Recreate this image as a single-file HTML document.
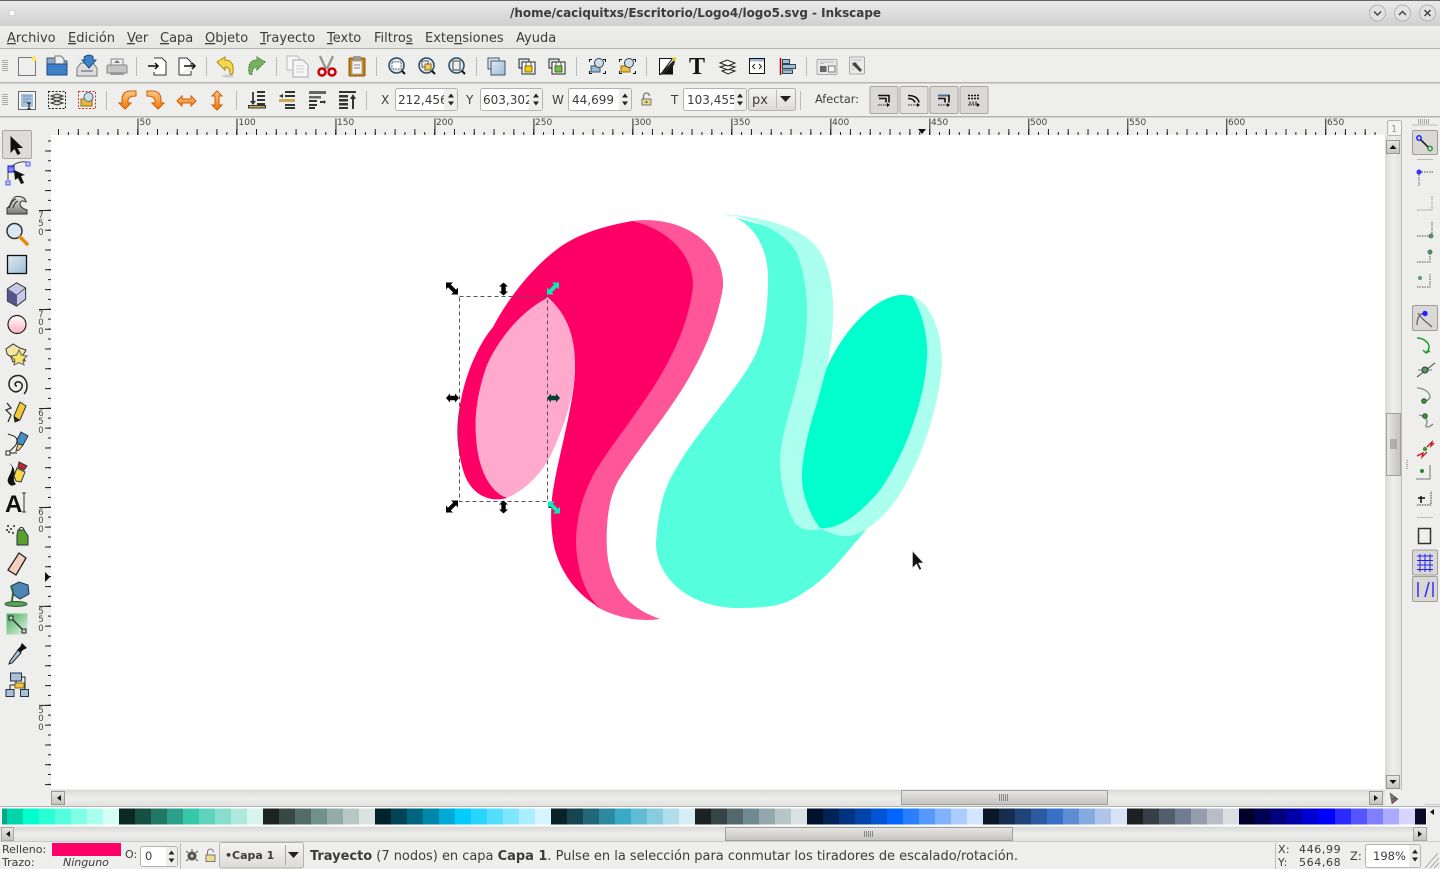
<!DOCTYPE html>
<html lang="es"><head><meta charset="utf-8"><title>logo5.svg - Inkscape</title>
<style>
html,body{margin:0;padding:0;background:#eeeeec;width:1440px;height:869px;overflow:hidden}
svg{display:block}
text{font-family:"DejaVu Sans","Liberation Sans",sans-serif;fill:#3c3c3c}
.m{font-size:13px}
.s{font-size:11.5px}
.r{font-size:9px;fill:#444}
.rv{font-size:8.5px;fill:#444;text-anchor:middle}
</style></head><body>
<svg width="1440" height="869" viewBox="0 0 1440 869" xmlns="http://www.w3.org/2000/svg">
<defs>
<linearGradient id="tb" x1="0" y1="0" x2="0" y2="1"><stop offset="0" stop-color="#ebebeb"/><stop offset="1" stop-color="#cfcfcf"/></linearGradient>
<linearGradient id="mn" x1="0" y1="0" x2="0" y2="1"><stop offset="0" stop-color="#eeefea"/><stop offset="1" stop-color="#e6e6e3"/></linearGradient>
<linearGradient id="sh" x1="0" y1="0" x2="0" y2="1"><stop offset="0" stop-color="#d9d9d6"/><stop offset=".5" stop-color="#eeeeec"/><stop offset="1" stop-color="#e2e2df"/></linearGradient>
<linearGradient id="sv" x1="0" y1="0" x2="1" y2="0"><stop offset="0" stop-color="#d9d9d6"/><stop offset=".5" stop-color="#eeeeec"/><stop offset="1" stop-color="#e2e2df"/></linearGradient>
<linearGradient id="th" x1="0" y1="0" x2="0" y2="1"><stop offset="0" stop-color="#e8e7e5"/><stop offset="1" stop-color="#c4c2be"/></linearGradient>
<linearGradient id="tv" x1="0" y1="0" x2="1" y2="0"><stop offset="0" stop-color="#e8e7e5"/><stop offset="1" stop-color="#c4c2be"/></linearGradient>
<linearGradient id="btn" x1="0" y1="0" x2="0" y2="1"><stop offset="0" stop-color="#f4f4f2"/><stop offset="1" stop-color="#dcdbd8"/></linearGradient>
<linearGradient id="blue" x1="0" y1="0" x2="1" y2="1"><stop offset="0" stop-color="#dfe9f2"/><stop offset="1" stop-color="#9dbcd6"/></linearGradient>
<linearGradient id="org" x1="0" y1="0" x2="0" y2="1"><stop offset="0" stop-color="#fcc98e"/><stop offset="1" stop-color="#f57900"/></linearGradient>
<linearGradient id="grn" x1="0" y1="0" x2="1" y2="1"><stop offset="0" stop-color="#3fae5c"/><stop offset="1" stop-color="#e8f5ea"/></linearGradient>
<linearGradient id="pnk" x1="0" y1="0" x2="0" y2="1"><stop offset="0" stop-color="#fff"/><stop offset="1" stop-color="#ffb0c0"/></linearGradient>
<linearGradient id="wave" x1="0" y1="0" x2="0" y2="1"><stop offset="0" stop-color="#eee"/><stop offset="1" stop-color="#777"/></linearGradient>
<g id="h1"><path d="M-6.500-6.500H.5L-1.700-4.500 3.500.7 5.500-1.500V5.500H-1.500L.7 3.500-4.500-1.700-6.500.5Z"/></g>
<g id="h2"><path d="M5.500-6.500H-1.500L.7-4.500-4.500.7-6.500-1.500V5.500H.5L-1.700 3.500 3.500-1.700 5.500.5Z"/></g>
<g id="hv"><path d="M0-6.500 4.500-2.500H2.200V2.500H4.500L0 6.500-4.500 2.500H-2.200V-2.500H-4.500Z"/></g>
<g id="hh"><path d="M-6.500 0-2.500-4.500V-2.200H2.500V-4.500L6.500 0 2.500 4.500V2.200H-2.500V4.500Z"/></g>
<g id="spn"><path d="M0-6 3-2H-3Z M0 6 3 2H-3Z" fill="#222"/></g>
<g id="up"><path d="M-3.500 2 0-2 3.500 2Z" fill="#111"/></g>
</defs>

<!-- window chrome -->
<rect width="1440" height="869" fill="#eeeeec"/>
<rect width="1440" height="26" fill="url(#tb)"/>
<rect width="1440" height="1" fill="#666"/>
<circle cx="12" cy="13" r="3" fill="#fff" stroke="#ccc"/>
<text x="510" y="17" style="font-size:12px;font-weight:bold" textLength="371" lengthAdjust="spacingAndGlyphs">/home/caciquitxs/Escritorio/Logo4/logo5.svg - Inkscape</text>
<g fill="#e2e2e2" stroke="#b5b5b5"><circle cx="1377.500" cy="13" r="8"/><circle cx="1402.500" cy="13" r="8"/><circle cx="1427.500" cy="13" r="8"/></g>
<g fill="none" stroke="#444" stroke-width="1.500"><path d="M1374 11.500l3.500 3.500 3.500-3.500M1399 15l3.500-3.500 3.500 3.500M1424.500 10l6 6M1430.500 10l-6 6"/></g>

<!-- menu -->
<rect y="26" width="1440" height="22" fill="url(#mn)"/>
<rect y="48" width="1440" height="1" fill="#b5b5b0"/>
<g class="m">
<text class="m" x="7" y="42"><tspan text-decoration="underline">A</tspan>rchivo</text>
<text class="m" x="68" y="42"><tspan text-decoration="underline">E</tspan>dición</text>
<text class="m" x="127" y="42"><tspan text-decoration="underline">V</tspan>er</text>
<text class="m" x="160" y="42"><tspan text-decoration="underline">C</tspan>apa</text>
<text class="m" x="205" y="42"><tspan text-decoration="underline">O</tspan>bjeto</text>
<text class="m" x="260" y="42"><tspan text-decoration="underline">T</tspan>rayecto</text>
<text class="m" x="327" y="42"><tspan text-decoration="underline">T</tspan>exto</text>
<text class="m" x="374" y="42">Filtro<tspan text-decoration="underline">s</tspan></text>
<text class="m" x="425" y="42">Exte<tspan text-decoration="underline">n</tspan>siones</text>
<text class="m" x="516" y="42">Ayuda</text>
</g>

<!-- toolbars background -->
<rect y="82" width="1440" height="1.500" fill="#b5b5b0"/>
<rect y="116" width="1440" height="1.500" fill="#b5b5b0"/>
<g stroke="#aaa"><path d="M2 60.500h6M2 62.500h6M2 64.500h6M2 66.500h6M2 68.500h6M2 70.500h6M2 94.500h6M2 96.500h6M2 98.500h6M2 100.500h6M2 102.500h6M2 104.500h6M12 119v5M14 119v5M16 119v5M18 119v5M20 119v5"/></g>
<g stroke="#bbb"><path d="M136.500 57v19M206.500 57v19M276.500 57v19M376.500 57v19M476.500 57v19M576.500 57v19M646.500 57v19M806.500 57v19M106.500 91v19M236.500 91v19M366.500 91v19M800.500 91v19"/></g>

<!-- toolbar 1 icons -->
<g>
<rect x="18.500" y="57.500" width="17" height="18" fill="#eee" stroke="#777"/><circle cx="34" cy="59" r="2.500" fill="#fce94f"/>
<path d="M47 75V58h8l2 3h10v14Z" fill="#8aa8c8" stroke="#456"/><path d="M55 56h6l3 3v6H55Z" fill="#eee" stroke="#777"/><path d="M47 64H67V75H47Z" fill="#3f7fc7" stroke="#204a87"/>
<path d="M77 68l4-5h12l4 5v8H77Z" fill="#ddd" stroke="#777"/><path d="M84 57c4-3 8-2 9 0v3h3l-7 8-7-8h3Z" fill="#3a85c7" stroke="#204a87"/><path d="M81 71h12" stroke="#999" stroke-width="2"/>
<path d="M111 59h12v7h-12Z" fill="#eee" stroke="#888"/><path d="M108 65h18q1 0 1 2v6h-20v-6q0-2 1-2Z" fill="#c5c5c5" stroke="#888"/><rect x="110" y="72" width="14" height="3" fill="#999"/><path d="M117 60l-3 3h6Z" fill="#777"/>
<path d="M154 58h8l4 4v13h-12v-3" fill="#fff" stroke="#333"/><path d="M148 66h10m-3-3 3 3-3 3" fill="none" stroke="#111" stroke-width="1.500"/>
<path d="M179 75V58h8l4 4v4M191 71v4h-12" fill="#fff" stroke="#333"/><path d="M184 66h11m-3-3 3 3-3 3" fill="none" stroke="#111" stroke-width="1.500"/>
<path d="M217 62l8-5v3c7 0 9 5 8 13-1 2-2 2-3 1 0-5-2-7-5-7v3Z" fill="#f3d84c" stroke="#a58a10"/><ellipse cx="228" cy="76" rx="6" ry="1.500" fill="#ccc"/>
<path d="M265 62l-8-5v3c-7 0-9 5-8 13 1 2 2 2 3 1 0-5 2-7 5-7v3Z" fill="#76b260" stroke="#3b7a28" stroke-dasharray="2 1"/>
<path d="M287 56h10l3 3v11h-13Z" fill="#f6f6f6" stroke="#bbb"/><path d="M293 60h10l5 5v12h-15Z" fill="#f6f6f6" stroke="#aaa"/><path d="M296 66h8M296 69h8M296 72h8" stroke="#ccc"/>
<path d="M320 56l6 13M333 56l-6 13" stroke="#999" stroke-width="2.500"/><circle cx="322" cy="72" r="3.500" fill="none" stroke="#cc0000" stroke-width="2.500"/><circle cx="332" cy="72" r="3.500" fill="none" stroke="#cc0000" stroke-width="2.500"/>
<rect x="349" y="58" width="16" height="18" rx="1" fill="#c17d11" stroke="#8f5902"/><rect x="352" y="61" width="10" height="13" fill="#f4f4f4" stroke="#aaa"/><rect x="353" y="56" width="8" height="4" rx="1" fill="#999"/><path d="M354 65h6M354 68h6" stroke="#888"/>
</g>
<g>
<g fill="#dbe6f0" stroke="#2e4a60" stroke-width="1.500"><circle cx="396.500" cy="65.500" r="7.500"/><circle cx="426.500" cy="65.500" r="7.500"/><circle cx="456.500" cy="65.500" r="7.500"/></g>
<path d="M402 71l3 3M432 71l3 3M462 71l3 3" stroke="#111" stroke-width="2"/>
<rect x="392" y="62" width="9" height="7" fill="#fff" stroke="#555" stroke-dasharray="1.500 1"/><rect x="422" y="61" width="6" height="6" fill="#fff" stroke="#555"/><rect x="425" y="64" width="6" height="6" fill="#f0d060" stroke="#8a6a10"/><rect x="453" y="61" width="7" height="9" fill="#eee" stroke="#444"/>
<rect x="488" y="58" width="11" height="11" fill="#dce7f1" stroke="#456"/><rect x="491" y="61" width="14" height="14" fill="url(#blue)" stroke="#456"/>
<rect x="519" y="59" width="10" height="9" fill="#dce7f1" stroke="#222"/><rect x="522" y="62" width="13" height="12" fill="#fff" stroke="#222"/><rect x="525" y="66" width="7" height="6" fill="#edd400" stroke="#8a6a10"/><path d="M526 66v-2a2 2 0 0 1 5 0v2" fill="none" stroke="#555"/>
<rect x="549" y="59" width="10" height="9" fill="#dce7f1" stroke="#222"/><rect x="552" y="62" width="13" height="12" fill="#fff" stroke="#222"/><rect x="555" y="66" width="7" height="6" fill="#73c04f" stroke="#3a6a10"/><path d="M556 66v-2a2 2 0 0 1 5 0v2" fill="none" stroke="#555"/>
<g fill="#111"><path d="M589 59h3v1h-2v2h-1ZM603 59h3v3h-1v-2h-2ZM589 71h1v2h2v1h-3ZM605 71h1v3h-3v-1h2Z"/><path d="M619 59h3v1h-2v2h-1ZM633 59h3v3h-1v-2h-2ZM619 71h1v2h2v1h-3ZM635 71h1v3h-3v-1h2Z"/></g>
<rect x="591" y="66" width="9" height="6" fill="#9db8d2" stroke="#456"/><circle cx="599" cy="63" r="4.500" fill="#cfdde9" stroke="#345"/>
<rect x="621" y="66" width="9" height="6" fill="#f0c040" stroke="#8a6a10"/><circle cx="629" cy="63" r="4.500" fill="#cfdde9" stroke="#345"/>
<path d="M659.500 58.500h13l-12 16h-1Z" fill="#fff" stroke="#111"/><path d="M660 74.500l13-13v13Z" fill="#111"/><path d="M660 74l16-16-2 7-10 9Z" fill="#222"/><path d="M672 58l4-1-1 5Z" fill="#edd400"/>
<text x="689" y="74" style="font-family:'Liberation Serif',serif;font-weight:bold;font-size:24px;fill:#111">T</text>
<g fill="#f4f4f4" stroke="#222"><path d="M722 71l6-2 7 2-7 3Z"/><path d="M720 67l7-2 8 2-7 3Z"/><path d="M720 63l7-3 8 3-7 3Z"/></g>
<rect x="749.500" y="58.500" width="15" height="15" fill="#fff" stroke="#111"/><rect x="750" y="59" width="14" height="2.500" fill="#9db8d2"/><path d="M755 64l-2.500 2.500 2.500 2.500M759 64l2.500 2.500-2.500 2.500" fill="none" stroke="#222"/>
<path d="M780.500 58v17" stroke="#a40000" stroke-width="1.500"/><g fill="#a3bfd8" stroke="#345"><rect x="782.500" y="59.500" width="7" height="4"/><rect x="782.500" y="64.500" width="13" height="4"/><rect x="782.500" y="70" width="10" height="3.500"/></g>
<rect x="817" y="59.500" width="20" height="15" rx="1" fill="#e8e8e8" stroke="#aaa"/><path d="M820 62h14M820 63.500h4" stroke="#bbb"/><rect x="820" y="66" width="6.500" height="6" fill="#666"/><rect x="828.500" y="66" width="6.500" height="6" fill="#f5f5f5" stroke="#777"/>
<rect x="849.500" y="57" width="15" height="17" rx="1" fill="#ececec" stroke="#aaa"/><path d="M851 60h11M851 63h7M851 66h4M851 69h4" stroke="#bbb"/><path d="M855 62l7 8-2 2-6-6-2-2Z" fill="#444"/>
</g>

<!-- toolbar 2 icons -->
<g>
<rect x="18.500" y="91.500" width="17" height="18" fill="#f5f5f5" stroke="#666"/><rect x="21" y="94" width="12" height="13" fill="#a9c0da"/><path d="M23 96h8M23 99h8M23 102h5" stroke="#6a8fb5"/><path d="M29 103v6M27 103h4M27 109h4" stroke="#111"/>
<rect x="48.500" y="91.500" width="17" height="17" fill="none" stroke="#222" stroke-dasharray="2 1.500"/><g fill="#ddd" stroke="#333"><path d="M51 103l6-2 6 2-6 2Z"/><path d="M51 99l6-2 6 2-6 2Z"/><path d="M51 96l6-2 6 2-6 2Z"/></g>
<rect x="78.500" y="91.500" width="17" height="17" fill="none" stroke="#c33" stroke-dasharray="2 1.500"/><rect x="81" y="99" width="11" height="7" fill="#e7b93d" stroke="#8a6a10"/><circle cx="88.500" cy="97" r="4.500" fill="#cfdde9" stroke="#567"/>
<g fill="url(#org)" stroke="#ce5c00"><path d="M136 91h-5c-6 0-9 3-9 9v3h-3l6 6 6-6h-3v-2c0-3 2-5 8-5Z"/><path d="M147 91h5c6 0 9 3 9 9v3h3l-6 6-6-6h3v-2c0-3-2-5-8-5Z"/><path d="M177 101l5-5v3h9v-3l5 5-5 5v-3h-9v3Z"/><path d="M217 91l5 5h-3v9h3l-5 5-5-5h3v-9h-3Z"/></g>
<g fill="#333"><rect x="257" y="91" width="8" height="2"/><rect x="257" y="95" width="8" height="2"/><rect x="257" y="99" width="8" height="2"/><rect x="257" y="103" width="8" height="2"/><path d="M253 92v10" stroke="#111" stroke-width="1.500"/><path d="M250 101h6l-3 4Z"/></g><rect x="248.500" y="105.500" width="17" height="2.500" fill="#c9a95a" stroke="#333"/>
<g fill="#333"><rect x="285" y="91" width="10" height="2"/><rect x="285" y="95" width="10" height="2"/><rect x="279" y="99" width="16" height="3" fill="#c9a95a"/><rect x="285" y="104" width="10" height="2"/><rect x="285" y="107" width="10" height="2"/><path d="M279 96l4-2v4Z"/></g>
<g fill="#333"><rect x="309" y="91" width="17" height="3" fill="#666"/><rect x="309" y="96" width="12" height="2.500" fill="#666"/><rect x="309" y="100" width="8" height="2"/><rect x="309" y="104" width="8" height="2"/><rect x="309" y="107" width="6" height="2"/><path d="M320 101h4v-1l2 2-2 2v-1h-4Z"/></g>
<g fill="#333"><rect x="339" y="91" width="17" height="2"/><rect x="339" y="95" width="9" height="2.500"/><rect x="339" y="99" width="9" height="2.500"/><rect x="339" y="103" width="9" height="2.500"/><rect x="339" y="107" width="9" height="2"/><path d="M353 94l3 5h-2v10h-2V99h-2Z"/></g>
</g>

<!-- spinners -->
<g font-size="12">
<text class="s" x="381" y="104" style="font-size:12px">X</text>
<text class="s" x="466" y="104" style="font-size:12px">Y</text>
<text class="s" x="552" y="104" style="font-size:12px">W</text>
<text class="s" x="671" y="104" style="font-size:12px">T</text>
</g>
<g fill="#fff" stroke="#b5b3ae"><rect x="395.500" y="88.500" width="62" height="22" rx="2"/><rect x="480.500" y="88.500" width="62" height="22" rx="2"/><rect x="568.500" y="88.500" width="63" height="22" rx="2"/><rect x="683.500" y="88.500" width="63" height="22" rx="2"/></g>
<g><text x="398" y="104" style="font-size:12px">212,456</text><text x="483" y="104" style="font-size:12px">603,302</text><text x="572" y="104" style="font-size:12px">44,699</text><text x="687" y="104" style="font-size:12px">103,455</text></g>
<g fill="#eeeeec"><rect x="444" y="89" width="13" height="21"/><rect x="529" y="89" width="13" height="21"/><rect x="619" y="89" width="12" height="21"/><rect x="734" y="89" width="12" height="21"/></g>
<use href="#spn" x="451" y="99.500"/><use href="#spn" x="536" y="99.500"/><use href="#spn" x="625" y="99.500"/><use href="#spn" x="740" y="99.500"/>
<path d="M642 105v-6h9v6Z" fill="#e9d78a" stroke="#777"/><path d="M643.500 99v-3a3 3 0 0 1 6 0" fill="none" stroke="#777" stroke-width="1.300"/><circle cx="646.500" cy="102" r="1" fill="#444"/>
<rect x="748.500" y="88.500" width="47" height="22" rx="2" fill="url(#btn)" stroke="#b5b3ae"/><path d="M776.500 90v18" stroke="#bbb"/><path d="M780 96h11l-5.500 6Z" fill="#222"/>
<text x="752" y="104" style="font-size:13px">px</text>
<text x="815" y="103" style="font-size:11.500px" textLength="44" lengthAdjust="spacingAndGlyphs">Afectar:</text>
<g fill="#dad9d6" stroke="#a8a7a3"><rect x="870" y="86.500" width="28" height="27" rx="1.500"/><rect x="900" y="86.500" width="28" height="27" rx="1.500" fill="#e3e2df"/><rect x="930" y="86.500" width="28" height="27" rx="1.500"/><rect x="960" y="86.500" width="28" height="27" rx="1.500"/></g>
<g fill="none" stroke="#111" stroke-width="1.600"><path d="M878 95.500h11v7M908 95.500c6 0 10 2 11 7M908 98.500c4 0 6 1 7 4M938 95.500h11v7M938 98.500h7v4M879 98.500h7v4"/><path d="M968 95.500h12M968 98.500h12" stroke-dasharray="2 1"/></g>
<path d="M878 105h9M908 105h9M938 105h9M968 105h9" stroke="#222" stroke-dasharray="1.500 1"/>
<path d="M887 103v4l3-2ZM917 103v4l3-2ZM947 103v4l3-2ZM977 103v4l3-2Z" fill="#111"/>
<path d="M938 95.500h10" stroke="#3a6ea5" stroke-width="1.500"/>
<path d="M973 101.500v3M976 101.500v3M970 101.500v3" stroke="#111"/>

<!-- rulers -->
<rect x="0" y="117.500" width="1385" height="18" fill="#eeeeec"/>
<g stroke="#222" stroke-width="1" fill="none">
<line x1="58" y1="133.500" x2="1380" y2="133.500" stroke-width="3" stroke-dasharray="1 8.899"/>
<line x1="58" y1="132" x2="1380" y2="132" stroke-width="6" stroke-dasharray="1 18.799"/>
<line x1="137.500" y1="127" x2="1380" y2="127" stroke-width="17" stroke-dasharray="1 97.980"/>
<line x1="49.500" y1="140.500" x2="49.500" y2="789" stroke-width="3" stroke-dasharray="1 8.899"/>
<line x1="48" y1="150.500" x2="48" y2="789" stroke-width="6" stroke-dasharray="1 18.799"/>
<line x1="45" y1="210" x2="45" y2="789" stroke-width="12" stroke-dasharray="1 97.980"/>
</g>
<g class="r">
<text class="r" x="139.500" y="125">50</text><text class="r" x="238.500" y="125">100</text><text class="r" x="337" y="125">150</text><text class="r" x="436" y="125">200</text><text class="r" x="535" y="125">250</text><text class="r" x="634" y="125">300</text><text class="r" x="733" y="125">350</text><text class="r" x="832" y="125">400</text><text class="r" x="931" y="125">450</text><text class="r" x="1030" y="125">500</text><text class="r" x="1129" y="125">550</text><text class="r" x="1228" y="125">600</text><text class="r" x="1327" y="125">650</text>
</g>
<path d="M918 129h8l-4 5Z" fill="#111"/>
<g>
<text class="rv" x="41" y="218">7</text><text class="rv" x="41" y="226">5</text><text class="rv" x="41" y="235">0</text>
<text class="rv" x="41" y="317">7</text><text class="rv" x="41" y="325">0</text><text class="rv" x="41" y="334">0</text>
<text class="rv" x="41" y="416">6</text><text class="rv" x="41" y="424">5</text><text class="rv" x="41" y="433">0</text>
<text class="rv" x="41" y="515">6</text><text class="rv" x="41" y="523">0</text><text class="rv" x="41" y="532">0</text>
<text class="rv" x="41" y="614">5</text><text class="rv" x="41" y="622">5</text><text class="rv" x="41" y="631">0</text>
<text class="rv" x="41" y="713">5</text><text class="rv" x="41" y="721">0</text><text class="rv" x="41" y="730">0</text>
</g>
<path d="M45 572v10l5-5Z" fill="#111"/>

<!-- canvas -->
<rect x="51" y="135" width="1334" height="654" fill="#fff"/>
<!-- artwork -->
<path d="M632 221C648 219 670 220 690 231 710 242 724 262 723 287 716 330 697 368 673 403 655 430 630 460 617 483 607 503 606 530 607 550 609 578 620 605 660 619 640 622 617 618 597 607L578 578 565 540 590 420 632 221Z" fill="#ff5599"/>
<path d="M632 221C668 229 694 255 693 287 688 325 672 362 640 407 622 433 605 455 595 472 582 495 576 520 576 543 577 570 585 595 600 608 578 595 562 575 555 550 550 530 550 505 554 485 560 450 575 400 575 367 575 335 562 308 547 297L507 498C490 503 470 495 463 470 456 445 456 425 460 405 465 375 478 345 493 327 510 295 535 265 560 247 580 233 605 226 632 221Z" fill="#ff0066"/>
<path d="M547 298C520 312 498 340 487 365 478 390 474 415 476 437 478 470 490 492 507 498 525 490 540 475 550 457 565 425 575 395 575 363 575 335 565 310 547 298Z" fill="#ffaacc"/>
<path d="M723 214C750 218 770 245 768 285 767 320 763 345 748 368 728 400 695 435 677 467 662 490 658 515 656 543 656 575 685 606 735 608 760 608 780 608 800 595 825 580 835 567 870 525L840 536 820 300 808 248 772 228Z" fill="#55ffdd"/>
<path d="M723 214C765 217 800 228 815 245 830 262 834 290 833 320 832 345 828 360 826 372L880 400 912 296C930 302 942 330 942 363 940 400 925 450 905 485 895 505 880 520 868 528 855 537 845 537 837 535 830 533 825 531 822 529 810 531 800 530 795 523 787 510 780 485 780 460 781 430 798 390 804 350 808 320 810 290 797 253 785 232 755 218 723 214Z" fill="#aaffee"/>
<path d="M912 296C924 315 928 340 927 357 925 400 905 455 880 490 862 512 840 530 820 528 810 515 802 495 802 477 802 455 810 425 817 403L826 370C840 335 875 293 905 295Z" fill="#00ffcc"/>
<!-- selection -->
<rect x="459.500" y="296.500" width="88" height="205" fill="none" stroke="#555" stroke-dasharray="4 3"/>
<use href="#h1" x="452.500" y="289"/><use href="#hv" x="503.500" y="289"/><use href="#h2" x="553.500" y="289" fill="#00f0b8"/>
<use href="#hh" x="452.500" y="398"/><use href="#hh" x="553.500" y="398" fill="#033f30"/>
<use href="#h2" x="452.500" y="507"/><use href="#hv" x="503.500" y="507"/>
<rect x="548" y="502" width="4" height="6" fill="#000"/><use href="#h1" x="554.500" y="508" fill="#00f0b8"/>
<path d="M912.500 551v17l4-4 3 6 2-1-3-6h5Z" fill="#111" stroke="#ddd" stroke-width=".6"/>

<!-- vertical scrollbar -->
<rect x="1385" y="135" width="16" height="655" fill="url(#sv)"/>
<path d="M1401.500 135v655" stroke="#bbb"/>
<rect x="1387.500" y="120.500" width="14" height="15" rx="2" fill="#f4f4f2" stroke="#b5b3ae"/><text x="1391" y="132" style="font-size:10px;fill:#999">1</text>
<rect x="1386.500" y="140.500" width="13" height="13" fill="url(#th)" stroke="#999"/><use href="#up" x="1393" y="147"/>
<rect x="1386.500" y="775.500" width="13" height="13" fill="url(#th)" stroke="#999"/><use href="#up" transform="translate(1393 782) scale(1 -1)"/>
<rect x="1386.500" y="413.500" width="14" height="62" fill="url(#tv)" stroke="#a0a09c"/><path d="M1390 440h7M1390 442h7M1390 444h7M1390 446h7M1390 448h7" stroke="#888"/>
<path d="M1406.500 460v10M1407.500 460v10" stroke="#aaa" stroke-dasharray="1 1"/>

<!-- horizontal scrollbar -->
<rect x="51" y="790" width="1334" height="16" fill="url(#sh)"/>
<rect x="51.500" y="791.500" width="13" height="13" fill="url(#th)" stroke="#999"/><path d="M61 795v6l-4-3Z" fill="#111"/>
<rect x="1369.500" y="791.500" width="13" height="13" fill="url(#th)" stroke="#999"/><path d="M1374 795v6l4-3Z" fill="#111"/>
<rect x="901.500" y="790.500" width="206" height="14" fill="url(#th)" stroke="#a0a09c"/><path d="M999.500 794v7M1001.500 794v7M1003.500 794v7M1005.500 794v7M1007.500 794v7" stroke="#888"/>
<path d="M1390 793l8 6-6 5Z" fill="#556" stroke="#666" stroke-width=".6"/><path d="M1391 795l3 2-2 2Z" fill="#5a5"/><path d="M1392 800l4-1-3 3Z" fill="#c58"/>

<!-- palette -->
<rect x="0" y="806" width="1440" height="1" fill="#b5b5b0"/>
<rect x="1" y="807" width="1426" height="19" fill="#fff"/>
<g id="pal">
<rect x="2" y="808.500" width="5" height="16" fill="#00aa88"/>
<rect x="7" y="808.500" width="16" height="16" fill="#00d4aa"/><rect x="23" y="808.500" width="16" height="16" fill="#00ffcc"/><rect x="39" y="808.500" width="16" height="16" fill="#2affd5"/><rect x="55" y="808.500" width="16" height="16" fill="#55ffdd"/><rect x="71" y="808.500" width="16" height="16" fill="#80ffe6"/><rect x="87" y="808.500" width="16" height="16" fill="#aaffee"/><rect x="103" y="808.500" width="16" height="16" fill="#d5fff6"/>
<rect x="119" y="808.500" width="16" height="16" fill="#0b2822"/><rect x="135" y="808.500" width="16" height="16" fill="#165044"/><rect x="151" y="808.500" width="16" height="16" fill="#217867"/><rect x="167" y="808.500" width="16" height="16" fill="#2ca089"/><rect x="183" y="808.500" width="16" height="16" fill="#37c8ab"/><rect x="199" y="808.500" width="16" height="16" fill="#5fd3bc"/><rect x="215" y="808.500" width="16" height="16" fill="#87decd"/><rect x="231" y="808.500" width="16" height="16" fill="#afe9dd"/><rect x="247" y="808.500" width="16" height="16" fill="#d7f4ee"/>
<rect x="263" y="808.500" width="16" height="16" fill="#1c2422"/><rect x="279" y="808.500" width="16" height="16" fill="#374845"/><rect x="295" y="808.500" width="16" height="16" fill="#536c67"/><rect x="311" y="808.500" width="16" height="16" fill="#6f918a"/><rect x="327" y="808.500" width="16" height="16" fill="#93aca7"/><rect x="343" y="808.500" width="16" height="16" fill="#b7c8c4"/><rect x="359" y="808.500" width="16" height="16" fill="#dbe3e2"/>
<rect x="375" y="808.500" width="16" height="16" fill="#00222b"/><rect x="391" y="808.500" width="16" height="16" fill="#004455"/><rect x="407" y="808.500" width="16" height="16" fill="#006680"/><rect x="423" y="808.500" width="16" height="16" fill="#0088aa"/><rect x="439" y="808.500" width="16" height="16" fill="#00aad4"/><rect x="455" y="808.500" width="16" height="16" fill="#00ccff"/><rect x="471" y="808.500" width="16" height="16" fill="#2ad4ff"/><rect x="487" y="808.500" width="16" height="16" fill="#55ddff"/><rect x="503" y="808.500" width="16" height="16" fill="#80e5ff"/><rect x="519" y="808.500" width="16" height="16" fill="#aaeeff"/><rect x="535" y="808.500" width="16" height="16" fill="#d5f6ff"/>
<rect x="551" y="808.500" width="16" height="16" fill="#0b2228"/><rect x="567" y="808.500" width="16" height="16" fill="#164450"/><rect x="583" y="808.500" width="16" height="16" fill="#216778"/><rect x="599" y="808.500" width="16" height="16" fill="#2c89a0"/><rect x="615" y="808.500" width="16" height="16" fill="#37abc8"/><rect x="631" y="808.500" width="16" height="16" fill="#5fbcd3"/><rect x="647" y="808.500" width="16" height="16" fill="#87cdde"/><rect x="663" y="808.500" width="16" height="16" fill="#afdde9"/><rect x="679" y="808.500" width="16" height="16" fill="#d7eef4"/>
<rect x="695" y="808.500" width="16" height="16" fill="#1c2224"/><rect x="711" y="808.500" width="16" height="16" fill="#364448"/><rect x="727" y="808.500" width="16" height="16" fill="#53676c"/><rect x="743" y="808.500" width="16" height="16" fill="#6f8a91"/><rect x="759" y="808.500" width="16" height="16" fill="#93a7ac"/><rect x="775" y="808.500" width="16" height="16" fill="#b7c4c8"/><rect x="791" y="808.500" width="16" height="16" fill="#dbe2e3"/>
<rect x="807" y="808.500" width="16" height="16" fill="#00112b"/><rect x="823" y="808.500" width="16" height="16" fill="#002255"/><rect x="839" y="808.500" width="16" height="16" fill="#003380"/><rect x="855" y="808.500" width="16" height="16" fill="#0044aa"/><rect x="871" y="808.500" width="16" height="16" fill="#0055d4"/><rect x="887" y="808.500" width="16" height="16" fill="#0066ff"/><rect x="903" y="808.500" width="16" height="16" fill="#2a7fff"/><rect x="919" y="808.500" width="16" height="16" fill="#5599ff"/><rect x="935" y="808.500" width="16" height="16" fill="#80b3ff"/><rect x="951" y="808.500" width="16" height="16" fill="#aaccff"/><rect x="967" y="808.500" width="16" height="16" fill="#d5e5ff"/>
<rect x="983" y="808.500" width="16" height="16" fill="#0b1728"/><rect x="999" y="808.500" width="16" height="16" fill="#162d50"/><rect x="1015" y="808.500" width="16" height="16" fill="#214478"/><rect x="1031" y="808.500" width="16" height="16" fill="#2c5aa0"/><rect x="1047" y="808.500" width="16" height="16" fill="#3771c8"/><rect x="1063" y="808.500" width="16" height="16" fill="#5f8dd3"/><rect x="1079" y="808.500" width="16" height="16" fill="#87aade"/><rect x="1095" y="808.500" width="16" height="16" fill="#afc6e9"/><rect x="1111" y="808.500" width="16" height="16" fill="#d7e3f4"/>
<rect x="1127" y="808.500" width="16" height="16" fill="#1c1f24"/><rect x="1143" y="808.500" width="16" height="16" fill="#373e48"/><rect x="1159" y="808.500" width="16" height="16" fill="#535d6c"/><rect x="1175" y="808.500" width="16" height="16" fill="#6f7c91"/><rect x="1191" y="808.500" width="16" height="16" fill="#939dac"/><rect x="1207" y="808.500" width="16" height="16" fill="#b7bec8"/><rect x="1223" y="808.500" width="16" height="16" fill="#dbdee3"/>
<rect x="1239" y="808.500" width="16" height="16" fill="#00002b"/><rect x="1255" y="808.500" width="16" height="16" fill="#000055"/><rect x="1271" y="808.500" width="16" height="16" fill="#000080"/><rect x="1287" y="808.500" width="16" height="16" fill="#0000aa"/><rect x="1303" y="808.500" width="16" height="16" fill="#0000d4"/><rect x="1319" y="808.500" width="16" height="16" fill="#0000ff"/><rect x="1335" y="808.500" width="16" height="16" fill="#2a2aff"/><rect x="1351" y="808.500" width="16" height="16" fill="#5555ff"/><rect x="1367" y="808.500" width="16" height="16" fill="#8080ff"/><rect x="1383" y="808.500" width="16" height="16" fill="#aaaaff"/><rect x="1399" y="808.500" width="16" height="16" fill="#d5d5ff"/>
<rect x="1415" y="808.500" width="11" height="16" fill="#0b0b28"/>
</g>
<path d="M1434 809v6l-4-3Z" fill="#111"/>
<rect x="1424" y="804" width="16" height="1" fill="#ccc"/>

<!-- palette scrollbar -->
<rect x="0" y="827" width="1428" height="14" fill="url(#sh)"/>
<rect x="1.500" y="827.500" width="12" height="13" fill="url(#th)" stroke="#aaa"/><path d="M10 831v6l-4-3Z" fill="#111"/>
<rect x="1413.500" y="827.500" width="13" height="13" fill="url(#th)" stroke="#aaa"/><path d="M1418 831v6l4-3Z" fill="#111"/>
<rect x="725.500" y="827.500" width="287" height="13" fill="url(#th)" stroke="#a0a09c"/><path d="M864.500 831v6M866.500 831v6M868.500 831v6M870.500 831v6M872.500 831v6" stroke="#888"/>
<rect x="0" y="841" width="1440" height="1" fill="#c9c9c6"/>

<!-- status bar -->
<text x="2" y="853" style="font-size:11px">Relleno:</text>
<text x="2" y="866" style="font-size:11px">Trazo:</text>
<rect x="52" y="843" width="69" height="13" fill="#ff0066"/>
<text x="63" y="866" style="font-size:11px;font-style:italic">Ninguno</text>
<text x="125" y="858" style="font-size:11px">O:</text>
<rect x="140.500" y="846.500" width="37" height="20" rx="2" fill="#fff" stroke="#b5b3ae"/><rect x="166" y="847" width="11" height="19" fill="#eeeeec"/><use href="#spn" x="171.500" y="856.500"/>
<text x="145" y="860" style="font-size:11.500px">0</text>
<path d="M180.500 843v26" stroke="#bbb"/>
<circle cx="192" cy="856" r="4.500" fill="#555"/><path d="M186 851l2.500 2M192 849v3M198 851l-2.500 2M186 861l2.500-2M198 861l-2.500-2" stroke="#555"/><circle cx="192" cy="856" r="1.500" fill="#ddd"/>
<rect x="206" y="855" width="9" height="6.500" fill="#eedd88" stroke="#777"/><path d="M207.500 855v-3a3 3 0 0 1 6 0" fill="none" stroke="#777"/>
<rect x="219.500" y="842.500" width="84" height="25.500" rx="2" fill="url(#btn)" stroke="#b5b3ae"/><path d="M285.500 845v20" stroke="#aaa"/><path d="M288 852h11l-5.500 6Z" fill="#222"/>
<text x="225" y="859" style="font-size:11px;font-weight:bold">•Capa 1</text>
<text x="310" y="860" style="font-size:13px" textLength="708" lengthAdjust="spacingAndGlyphs"><tspan font-weight="bold">Trayecto</tspan> (7 nodos) en capa <tspan font-weight="bold">Capa 1</tspan>. Pulse en la selección para conmutar los tiradores de escalado/rotación.</text>
<path d="M1275.500 843v26" stroke="#bbb"/>
<g style="font-size:11px;letter-spacing:.4px"><text x="1278" y="853" style="font-size:11px">X:</text><text x="1299" y="853" style="font-size:11px" textLength="42">446,99</text><text x="1278" y="866" style="font-size:11px">Y:</text><text x="1299" y="866" style="font-size:11px" textLength="42">564,68</text></g>
<text x="1350" y="860" style="font-size:11.500px">Z:</text>
<rect x="1365.500" y="844.500" width="55" height="23" rx="2" fill="#fff" stroke="#b5b3ae"/><rect x="1409" y="845" width="11" height="22" fill="#eeeeec"/><use href="#spn" x="1415" y="855.500"/>
<text x="1373" y="860" style="font-size:11.500px">198%</text>
<path d="M1438 853l-13 15M1439 858l-9 10M1439 863l-5 5" stroke="#aaa"/>

<!-- left toolbox -->
<rect x="2.500" y="130.500" width="29" height="28" rx="1.500" fill="#dddcd9" stroke="#a9a8a4"/>
<path d="M10.500 136v17l4-4 3 6 3-1.500-3-5.500h5.500Z" fill="#111"/>
<g>
<path d="M11 168c3-5 10-7 16-6M8 180v-8" fill="none" stroke="#444"/><rect x="8" y="166" width="6" height="6" fill="#44f" fill-opacity=".6" stroke="#11c"/><rect x="26" y="162" width="4" height="4" fill="#ccd" stroke="#55f"/><rect x="6" y="181" width="4" height="4" fill="#ccd" stroke="#55f"/><path d="M14 170l11 5-4 1 3 7-3 1-3-6-3 2Z" fill="#111"/>
<path d="M7 214v-6c4-1 3-8 8-11 5-2 11 1 11 5-3-2-6-1-6 2 0 3 4 5 7 6v4Z" fill="url(#wave)" stroke="#333"/><path d="M9 208c2-4 3-8 7-9M13 208c1-3 2-6 5-7" fill="none" stroke="#333"/>
<circle cx="14.500" cy="231" r="7.500" fill="#dbe7f2" stroke="#333" stroke-width="1.500"/><path d="M20 237l7 7" stroke="#e08a10" stroke-width="3.500" stroke-linecap="round"/>
<rect x="7.500" y="255.500" width="19" height="18" fill="url(#blue)" stroke="#111" stroke-width="1.300"/>
<path d="M16.500 283l9 5v11l-9 7-9-5v-12Z" fill="#8888c0" stroke="#333" stroke-width="1.300"/><path d="M16.500 295l9-7v11l-9 7ZM16.500 295l-9-6 9-6 9 5Z" fill="#c8c8e8" stroke="#333" stroke-width=".7"/><path d="M7.500 289l9 6v11l-9-5Z" fill="#55558c"/>
<circle cx="17" cy="324.500" r="9" fill="url(#pnk)" stroke="#222" stroke-width="1.200"/>
<path d="M6 349l7-5 7 4 6 2-3 5 2 6-7-2-5 3-2-5-4-3Z" fill="#f3e6a0" stroke="#333"/><path d="M19 350l2.500 5 5.500 1-4 4 1 5-5-2.500-5 2.500 1-5-4-4 5.500-1Z" fill="#f6e36b" stroke="#666"/>
<path d="M17 386c-2 0-3-3 0-4 3-1 6 2 5 5-1 4-6 6-9 4-4-2-5-7-3-11 3-5 10-6 14-2 4 4 4 12 0 16" fill="none" stroke="#222" stroke-width="1.500"/>
<path d="M7 403l4 5-5 2 5 5-3 7" fill="none" stroke="#222" stroke-width="1.200"/><path d="M20 402l6 4-6 14-5 2-1-6Z" fill="#f4c936" stroke="#333"/><path d="M14 416l6 4-5 2Z" fill="#222"/>
<path d="M8 434c5 2 9 2 9 7s-5 7-8 11" fill="none" stroke="#222"/><rect x="6" y="451" width="4" height="4" fill="#fff" stroke="#222"/><path d="M10 453h7" stroke="#222"/><path d="M21 432l7 4-5 9-5-1-1-4Z" fill="#4a8cc4" stroke="#234"/><path d="M18 444l5 1-4 5-3 1Z" fill="#ecd96a" stroke="#333"/>
<path d="M9 463c3 3 4 4 2 9-2 5-5 8-2 12 2 3 6 1 7 0-2-2-3-5-1-9l-1-6c-1-2-3-5-5-6Z" fill="#111"/><path d="M19 462l8 4-3 4-6-3Z" fill="#cc2233" stroke="#333"/><path d="M17 468l8 4-4 10-5-1-2-5Z" fill="#f3d84c" stroke="#333"/>
<text x="5" y="512" style="font-family:'Liberation Sans',sans-serif;font-weight:bold;font-size:24px;fill:#111">A</text><path d="M24 493v19M22 493h4M22 512h4" stroke="#333"/>
<path d="M8 526h.1M11 529h.1M14 526h.1M9 532h.1M13 533h.1M7 530h.1" stroke="#333" stroke-width="2" stroke-linecap="round"/><path d="M18 530h6l4 6v9h-11v-10Z" fill="#5aa02c" stroke="#234"/><path d="M19 530a2.500 2.500 0 0 1 5 0" fill="none" stroke="#222"/>
<path d="M19 553l7 5-10 17-8-5Z" fill="#f5cfc0" stroke="#222" stroke-width="1.300"/>
<path d="M11 586l8-4 9 3 1 9-9 5-6-4Z" fill="#4d86b4" stroke="#234"/><path d="M11 586l2 6c0 4-1 7-1 9" fill="none" stroke="#2a6a3a" stroke-width="2"/><ellipse cx="16" cy="604" rx="11" ry="2.500" fill="#5aa05a" stroke="#2a5a2a"/>
<rect x="6.500" y="613.500" width="21" height="21" fill="url(#grn)"/><path d="M11 618l13 13" stroke="#333" stroke-width="1.500"/><rect x="9" y="616" width="4" height="4" fill="#ccc" stroke="#222"/><rect x="22" y="629" width="4" height="4" fill="#ccc" stroke="#222"/>
<path d="M22 643l5 5-4 2-3 3-3-3 3-3Z" fill="#111"/><path d="M18 650l3 3-9 10-3 1 1-3Z" fill="#a8c4dc" stroke="#222"/>
<rect x="10.500" y="673" width="11" height="8" fill="#a9c0da" stroke="#234"/><rect x="15" y="683" width="9" height="5" fill="#f0c040" stroke="#8a6a10"/><rect x="6" y="689.500" width="8" height="7" fill="#a9c0da" stroke="#234"/><rect x="20.500" y="689.500" width="8" height="7" fill="#a9c0da" stroke="#234"/><path d="M16 681v2M21 677h4v12M10 689v-4h5" fill="none" stroke="#222"/>
</g>

<!-- right snap bar -->
<path d="M1412 125h25" stroke="#bbb"/><path d="M1411 119h29" stroke="#eee"/><path d="M1418.500 119v5M1420.500 119v5M1422.500 119v5M1424.500 119v5M1426.500 119v5M1428.500 119v5" stroke="#aaa"/>
<g fill="#d9d8d5" stroke="#9f9e9a"><rect x="1412.500" y="130.500" width="25" height="24" rx="1.500"/><rect x="1412.500" y="305.500" width="25" height="25" rx="1.500"/><rect x="1412.500" y="550" width="25" height="25" rx="1.500"/><rect x="1412.500" y="576.500" width="25" height="25" rx="1.500"/></g>
<path d="M1417 159.500h16M1417 517.500h16" stroke="#bbb"/>
<g fill="none" stroke-width="1">
<circle cx="1419" cy="138" r="2.200" stroke="#22f" stroke-width="1.500"/><circle cx="1430" cy="148.500" r="2.200" stroke="#3a9a3a" stroke-width="1.500"/><path d="M1421 140l7 7" stroke="#111" stroke-width="1.500"/>
<path d="M1419 172h14M1419 172v14" stroke="#555" stroke-dasharray="1.500 1"/><circle cx="1419" cy="172" r="2.500" fill="#33f"/>
<path d="M1417 210h15V195" stroke="#8a9a8a" stroke-dasharray="1.500 1"/>
<path d="M1417 236h15V221" stroke="#555" stroke-dasharray="1.500 1"/><circle cx="1431" cy="236" r="2.500" fill="#5a8a6a"/>
<path d="M1417 262h13V250" stroke="#555" stroke-dasharray="1.500 1"/><circle cx="1430" cy="252" r="2.500" fill="#4a8a5a"/>
<path d="M1417 287h13V274" stroke="#555" stroke-dasharray="1.500 1"/><circle cx="1420" cy="278" r="2" fill="#5a9a6a"/>
<path d="M1417 325c0-9 4-12 9-12M1418 313c3 6 10 10 14 14" stroke="#666" stroke-width="1.300"/><circle cx="1425" cy="313.500" r="2.700" fill="#22f"/>
<path d="M1417 338c6 0 12 4 12 9 0 3-2 5-4 6m-2-3 3 3 4-2" stroke="#1e9a2a" stroke-width="1.500"/>
<path d="M1417 377l18-14" stroke="#444"/><path d="M1418 370l14 0" stroke="#777"/><circle cx="1425" cy="370" r="3" fill="#5a9a6a" stroke="#333"/>
<path d="M1417 388c6 0 13 4 13 9 0 2-2 3-4 4" stroke="#888" stroke-width="1.300"/><circle cx="1424" cy="401" r="2.300" fill="#3a9a3a" stroke="#2a5a2a"/>
<path d="M1419 415c5 1 8 4 8 7 0 3-3 4 0 5 2 0 4-1 6-3" stroke="#888" stroke-width="1.300"/><circle cx="1425" cy="416" r="2.300" fill="#3a9a3a" stroke="#2a5a2a"/>
<path d="M1417 456l6-3-1 4 5-5M1427 447l5-5-1 4 3-3" stroke="#cc1122" stroke-width="1.300"/><circle cx="1425" cy="449" r="2.200" fill="#3a9a3a"/>
<path d="M1416 479h14V465" stroke="#777"/><circle cx="1422" cy="471" r="2" fill="#2a8a2a"/>
<path d="M1417 505h14V491" stroke="#333" stroke-dasharray="1.500 1"/><path d="M1421 496v7M1418 498h7" stroke="#111" stroke-width="1.500"/>
<rect x="1418.500" y="528.500" width="12" height="15" fill="#eee" stroke="#333" stroke-width="1.500"/>
<path d="M1417 556h16M1417 560.500h16M1417 565h16M1417 569.500h16M1420 554v18M1425 554v18M1430 554v18" stroke="#22e"/>
<path d="M1418 582v15M1425 597l4-15M1433 582v15" stroke="#33e" stroke-width="1.500"/>
</g>
</svg>
</body></html>
